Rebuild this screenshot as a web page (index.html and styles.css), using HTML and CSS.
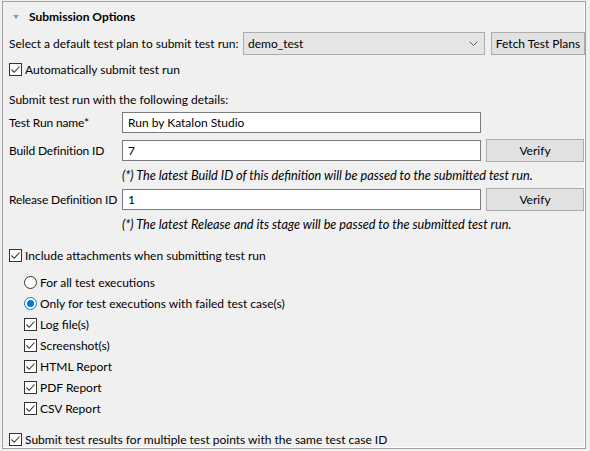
FILE: index.html
```html
<!DOCTYPE html>
<html>
<head>
<meta charset="utf-8">
<link rel="stylesheet" href="styles.css">
</head>
<body>
<div class="panel">
  <div class="header">
    <span class="tri"></span>
    <span class="title">Submission Options</span>
  </div>
  <div class="content">
    <div class="plan-row">
      <span class="plan-label">Select a default test plan to submit test run:</span>
      <div class="combo">
        <span class="combo-text">demo_test</span>
        <svg class="chev" width="9" height="5" viewBox="0 0 9 5"><path d="M0.5 0.5 L4.5 4.5 L8.5 0.5" fill="none" stroke="#606060" stroke-width="1"/></svg>
      </div>
      <div class="btn fetch">Fetch Test Plans</div>
    </div>

    <div class="check-row auto">
      <span class="cb"><svg width="11" height="11" viewBox="0 0 11 11"><path d="M1.5 5.5 L4.2 8.3 L9.5 2.5" fill="none" stroke="#333" stroke-width="1.1"/></svg></span>
      <span>Automatically submit test run</span>
    </div>

    <div class="section-title">Submit test run with the following details:</div>

    <div class="form-grid">
      <span class="lbl">Test Run name*</span>
      <div class="input">Run by Katalon Studio</div>
      <span></span>

      <span class="lbl">Build Definition ID</span>
      <div class="input">7</div>
      <div class="btn verify">Verify</div>

      <span></span>
      <span class="note">(*) The latest Build ID of this definition will be passed to the submitted test run.</span>

      <span class="lbl">Release Definition ID</span>
      <div class="input">1</div>
      <div class="btn verify">Verify</div>

      <span></span>
      <span class="note">(*) The latest Release and its stage will be passed to the submitted test run.</span>
    </div>

    <div class="check-row include">
      <span class="cb"><svg width="11" height="11" viewBox="0 0 11 11"><path d="M1.5 5.5 L4.2 8.3 L9.5 2.5" fill="none" stroke="#333" stroke-width="1.1"/></svg></span>
      <span>Include attachments when submitting test run</span>
    </div>

    <div class="options">
      <div class="check-row">
        <span class="rb"></span>
        <span>For all test executions</span>
      </div>
      <div class="check-row">
        <span class="rb on"></span>
        <span>Only for test executions with failed test case(s)</span>
      </div>
      <div class="check-row">
        <span class="cb"><svg width="11" height="11" viewBox="0 0 11 11"><path d="M1.5 5.5 L4.2 8.3 L9.5 2.5" fill="none" stroke="#333" stroke-width="1.1"/></svg></span>
        <span>Log file(s)</span>
      </div>
      <div class="check-row">
        <span class="cb"><svg width="11" height="11" viewBox="0 0 11 11"><path d="M1.5 5.5 L4.2 8.3 L9.5 2.5" fill="none" stroke="#333" stroke-width="1.1"/></svg></span>
        <span>Screenshot(s)</span>
      </div>
      <div class="check-row">
        <span class="cb"><svg width="11" height="11" viewBox="0 0 11 11"><path d="M1.5 5.5 L4.2 8.3 L9.5 2.5" fill="none" stroke="#333" stroke-width="1.1"/></svg></span>
        <span>HTML Report</span>
      </div>
      <div class="check-row">
        <span class="cb"><svg width="11" height="11" viewBox="0 0 11 11"><path d="M1.5 5.5 L4.2 8.3 L9.5 2.5" fill="none" stroke="#333" stroke-width="1.1"/></svg></span>
        <span>PDF Report</span>
      </div>
      <div class="check-row">
        <span class="cb"><svg width="11" height="11" viewBox="0 0 11 11"><path d="M1.5 5.5 L4.2 8.3 L9.5 2.5" fill="none" stroke="#333" stroke-width="1.1"/></svg></span>
        <span>CSV Report</span>
      </div>
    </div>

    <div class="check-row multi">
      <span class="cb"><svg width="11" height="11" viewBox="0 0 11 11"><path d="M1.5 5.5 L4.2 8.3 L9.5 2.5" fill="none" stroke="#333" stroke-width="1.1"/></svg></span>
      <span>Submit test results for multiple test points with the same test case ID</span>
    </div>
  </div>
</div>
</body>
</html>
```

FILE: styles.css
```css
html, body {
  margin: 0;
  padding: 0;
  background: #f0f0f0;
}
body {
  font-family: Lato, "Noto Sans", sans-serif;
  font-size: 12px;
  color: #000;
  width: 590px;
  height: 451px;
  overflow: hidden;
}
.panel {
  margin: 1px 0 0 2px;
  width: 584px;
  height: 448px;
  border: 1px solid #a0a0a0;
  box-shadow: inset -1px -1px 0 #ffffff;
  box-sizing: border-box;
  background: #f0f0f0;
}
.header {
  height: 29px;
  display: flex;
  align-items: center;
  padding-left: 10px;
}
.tri {
  width: 0;
  height: 0;
  border-left: 3px solid transparent;
  border-right: 3px solid transparent;
  border-top: 4px solid #9a9a9a;
  margin-right: 10px;
  margin-top: 1px;
}
.title {
  font-weight: bold;
}
.content {
  padding-left: 6px;
}
.plan-row {
  display: flex;
  align-items: center;
  height: 23px;
  margin-top: 1px;
}
.plan-label {
  width: 234px;
  white-space: nowrap;
}
.combo {
  width: 242px;
  height: 23px;
  box-sizing: border-box;
  border: 1px solid #adadad;
  background: #e5e5e5;
  display: flex;
  align-items: center;
  padding: 0 5px 0 4px;
}
.combo-text {
  flex: 1;
}
.chev {
  margin-right: 1px;
}
.btn {
  height: 23px;
  box-sizing: border-box;
  border: 1px solid #adadad;
  background: #e1e1e1;
  display: flex;
  align-items: center;
  justify-content: center;
}
.fetch {
  width: 94px;
  margin-left: 6px;
}
.check-row {
  display: flex;
  align-items: center;
  height: 16px;
}
.cb {
  width: 13px;
  height: 13px;
  box-sizing: border-box;
  border: 1px solid #333;
  background: #fff;
  display: flex;
  align-items: center;
  justify-content: center;
  margin-right: 3px;
  flex: none;
}
.cb svg {
  display: block;
}
.rb {
  width: 13px;
  height: 13px;
  box-sizing: border-box;
  border: 1px solid #333;
  border-radius: 50%;
  background: #fff;
  margin-right: 3px;
  flex: none;
  display: flex;
  align-items: center;
  justify-content: center;
}
.rb.on {
  border-color: #0078d7;
}
.rb.on::after {
  content: "";
  width: 7px;
  height: 7px;
  border-radius: 50%;
  background: #0078d7;
}
.auto {
  margin-top: 6px;
}
.section-title {
  height: 16px;
  line-height: 16px;
  margin-top: 15px;
}
.form-grid {
  display: grid;
  grid-template-columns: 108px 359px 98px;
  grid-template-rows: 23px 23px 16px 23px 16px;
  column-gap: 5px;
  row-gap: 5px;
  margin-top: 3px;
  align-items: center;
}
.lbl {
  white-space: nowrap;
  letter-spacing: -0.15px;
}
.input {
  height: 21px;
  box-sizing: border-box;
  border: 1px solid #7a7a7a;
  background: #fff;
  display: flex;
  align-items: center;
  padding-left: 5px;
  width: 359px;
}
.verify {
  width: 98px;
}
.note {
  grid-column: 2 / 4;
  font-style: italic;
  font-size: 12.7px;
  white-space: nowrap;
}
.include {
  margin-top: 15px;
}
.options {
  margin-top: 11px;
  padding-left: 15px;
  display: flex;
  flex-direction: column;
  gap: 5px;
}
.multi {
  margin-top: 15px;
}
```
